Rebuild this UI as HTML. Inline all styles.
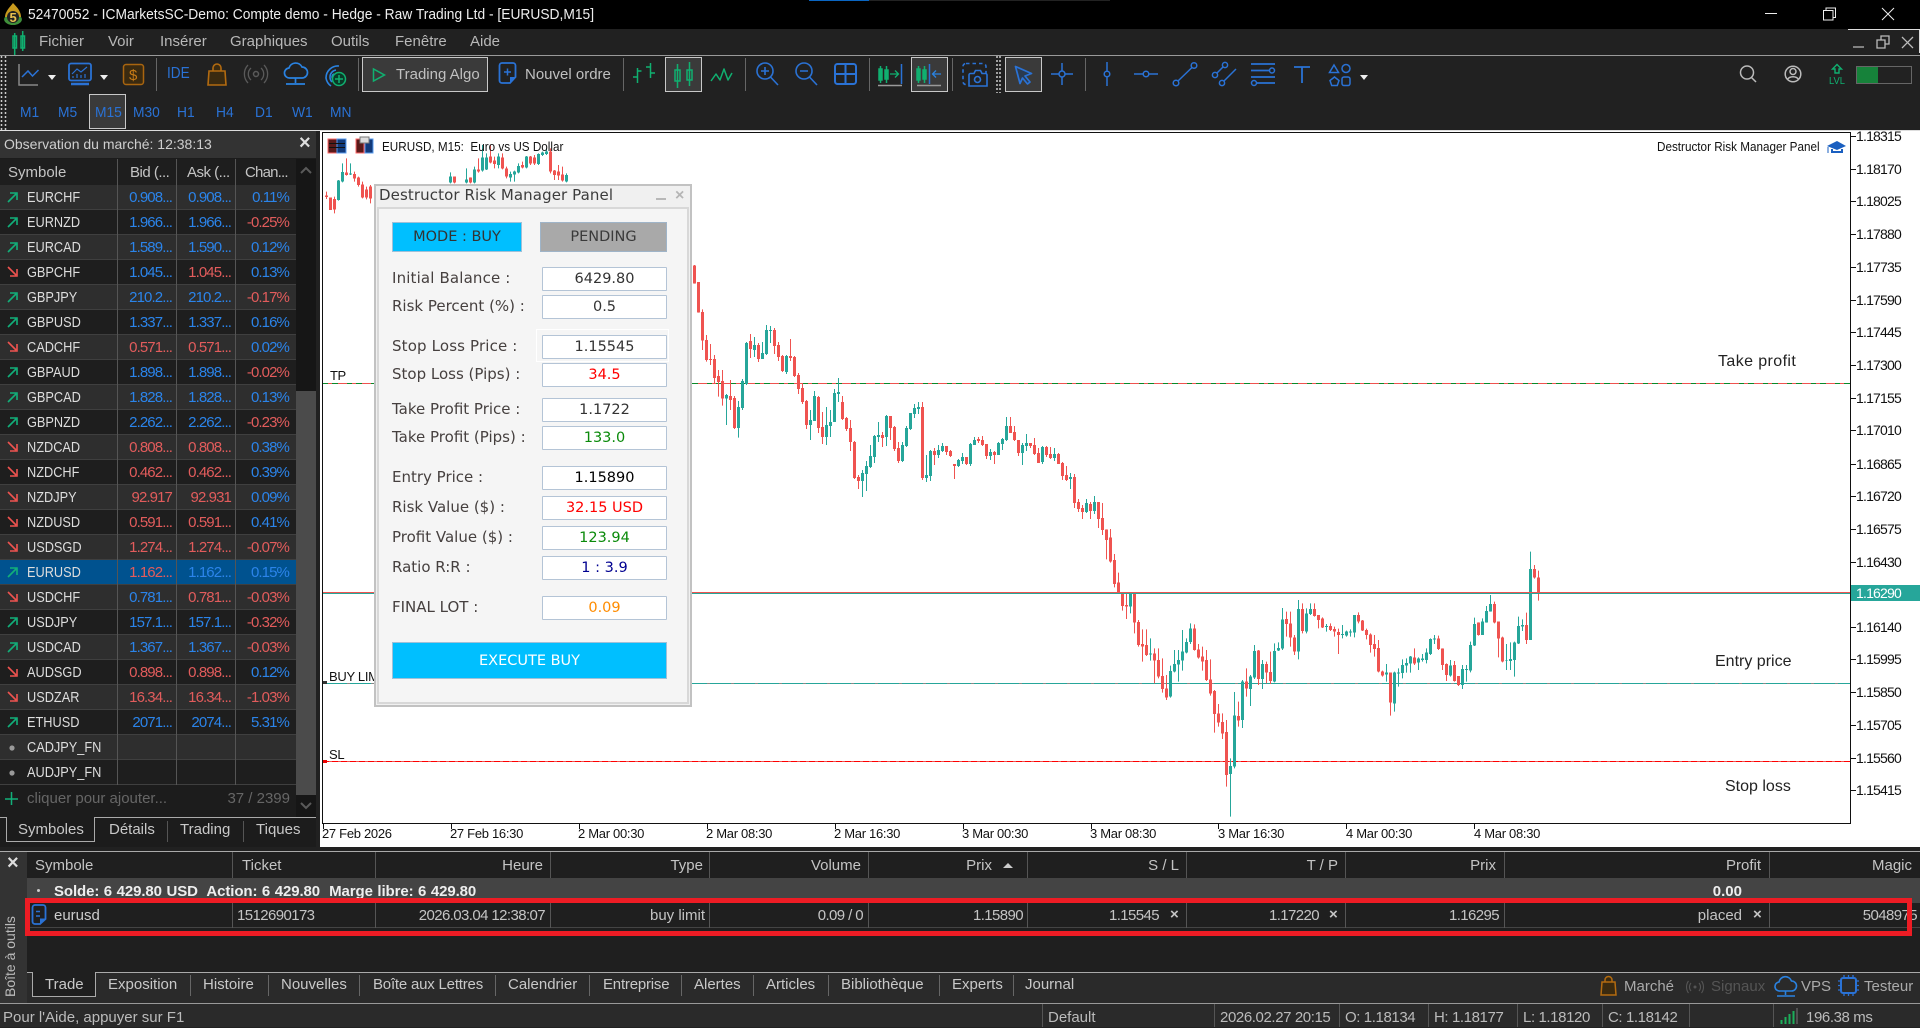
<!DOCTYPE html>
<html><head><meta charset="utf-8"><title>MT5</title>
<style>
html,body{margin:0;padding:0;width:1920px;height:1027px;overflow:hidden;background:#212121;font-family:"Liberation Sans",sans-serif;font-size:15px;color:#ccc}
.a,.t{position:absolute;white-space:nowrap}
.t{line-height:20px;height:20px}
.bx{position:absolute;box-sizing:border-box}
.r{height:25px;width:296px;position:relative;box-sizing:border-box;border-bottom:1px solid #3f3f3f;background:#1e1e1e}
.r.l{background:#2e2e2e}
.r.s{background:#00528f}
.r svg{position:absolute;left:6px;top:4px}
.r b{position:absolute;left:27px;top:3px;font-weight:normal;color:#ddd;line-height:20px;transform:scaleX(.85);transform-origin:0 50%;white-space:nowrap}
.r i{position:absolute;top:3px;font-style:normal;line-height:20px;letter-spacing:-.9px;white-space:nowrap}
.c2{right:124px}.c3{right:65px}.c4{right:7px}
.B{color:#2b84ea}.R{color:#e25c5c}
.n{letter-spacing:-.6px;color:#bdbdbd}
.hd{color:#c4c4c4}
.sp{position:absolute;width:1px;background:#555}
.tab{color:#c8c8c8}
.p{font-family:"DejaVu Sans","Liberation Sans",sans-serif;color:#3f3a3a}
.pl{position:absolute;left:392px;font-family:"DejaVu Sans",sans-serif;color:#46403f;font-size:15px;line-height:20px;white-space:nowrap}
.pi{position:absolute;left:542px;width:125px;height:24px;box-sizing:border-box;border:1px solid #b4c4d6;background:#fff;border-radius:1px;text-align:center;font-family:"DejaVu Sans",sans-serif;font-size:14.5px;line-height:23px;color:#333}
.px{font-size:14px;letter-spacing:-.8px;color:#111;left:1856px}
.tl{font-size:13px;letter-spacing:-.3px;color:#111;top:824px}
.m{color:#b8b8b8;top:32px}
.tf{color:#2a72d5;top:103px;transform:scaleX(.92);transform-origin:0 50%}
.pr{position:absolute;white-space:nowrap;line-height:20px;top:906px;letter-spacing:-.6px;color:#c4c4c4}
</style></head>
<body>
<!-- title bar -->
<div class="bx" style="left:0;top:0;width:1920px;height:29px;background:#000"></div>
<div class="bx" style="left:809px;top:0;width:301px;height:1px;background:#222"></div>
<div class="bx" style="left:809px;top:0;width:60px;height:1px;background:#0a66c2"></div>
<div class="t" style="left:28px;top:5px;color:#eee;transform:scaleX(.92);transform-origin:0 50%">52470052 - ICMarketsSC-Demo: Compte demo - Hedge - Raw Trading Ltd - [EURUSD,M15]</div>
<!-- bars -->
<div class="bx" style="left:0;top:55px;width:1920px;height:1px;background:#9a9a9a"></div>
<div class="bx" style="left:1848px;top:29px;width:72px;height:1px;background:#ddd"></div>
<div class="bx" style="left:1919px;top:29px;width:1px;height:24px;background:#ddd"></div>
<div class="bx" style="left:0;top:130px;width:1920px;height:1px;background:#ddd"></div>
<!-- menu -->
<div class="t m" style="left:39px">Fichier</div><div class="t m" style="left:108px">Voir</div><div class="t m" style="left:160px">Insérer</div><div class="t m" style="left:230px">Graphiques</div><div class="t m" style="left:331px">Outils</div><div class="t m" style="left:395px">Fenêtre</div><div class="t m" style="left:470px">Aide</div>
<!-- toolbar buttons -->
<div class="bx" style="left:362px;top:57px;width:126px;height:35px;background:#3a3a3a;border:1px solid #c8c8c8"></div>
<div class="bx" style="left:665px;top:57px;width:37px;height:35px;background:#3a3a3a;border:1px solid #c8c8c8"></div>
<div class="bx" style="left:911px;top:57px;width:37px;height:35px;background:#3a3a3a;border:1px solid #c8c8c8"></div>
<div class="bx" style="left:1005px;top:57px;width:37px;height:35px;background:#3a3a3a;border:1px solid #c8c8c8"></div>
<div class="bx" style="left:89px;top:94px;width:37px;height:35px;background:#3a3a3a;border:1px solid #c8c8c8"></div>
<div class="t" style="left:396px;top:65px;color:#c0c0c0">Trading Algo</div>
<div class="t" style="left:525px;top:65px;color:#c0c0c0">Nouvel ordre</div>
<div class="t" style="left:167px;top:64px;color:#2a72d5;font-size:16px;transform:scaleX(.85);transform-origin:0 50%">IDE</div>
<div class="t tf" style="left:20px">M1</div><div class="t tf" style="left:58px">M5</div><div class="t tf" style="left:95px">M15</div><div class="t tf" style="left:133px">M30</div><div class="t tf" style="left:177px">H1</div><div class="t tf" style="left:216px">H4</div><div class="t tf" style="left:255px">D1</div><div class="t tf" style="left:292px">W1</div><div class="t tf" style="left:330px">MN</div>

<!-- chart background -->
<div class="bx" style="left:320px;top:131px;width:1600px;height:716px;background:#fff"></div>
<div class="t" style="left:382px;top:137px;font-size:13px;color:#111;z-index:3;transform:scaleX(.9);transform-origin:0 50%">EURUSD, M15:&nbsp; Euro vs US Dollar</div>
<div class="t" style="left:1657px;top:137px;font-size:13px;color:#111;transform:scaleX(.9);transform-origin:0 50%">Destructor Risk Manager Panel</div>

<!-- chart svg -->
<svg class="a" style="left:0;top:0;z-index:1" width="1920" height="1027" viewBox="0 0 1920 1027" fill="none">
<g shape-rendering="crispEdges">
<path d="M322 132.5H1850.5V823.5H322.5V132" stroke="#111"/>
<path d="M1851 136.5h5M1851 169.5h5M1851 201.5h5M1851 234.5h5M1851 267.5h5M1851 300.5h5M1851 332.5h5M1851 365.5h5M1851 398.5h5M1851 430.5h5M1851 464.5h5M1851 496.5h5M1851 529.5h5M1851 562.5h5M1851 627.5h5M1851 659.5h5M1851 692.5h5M1851 725.5h5M1851 758.5h5M1851 790.5h5M323.5 824v5M451.5 824v5M579.5 824v5M707.5 824v5M835.5 824v5M963.5 824v5M1091.5 824v5M1218.5 824v5M1346.5 824v5M1474.5 824v5" stroke="#111"/>
<!-- lines -->
<path d="M323 383.5H1850" stroke="#ef5350"/>
<path d="M323 383.5H1850" stroke="#0a8a2a" stroke-dasharray="5 4 6 9"/>
<path d="M323 683.5H1850" stroke="#26a69a"/>
<path d="M323 683.5H1850" stroke="#888" stroke-dasharray="3 21"/>
<path d="M323 761.5H1850" stroke="#ef5350"/>
<path d="M323 761.5H1850" stroke="#f00" stroke-dasharray="6 3"/>
<!-- group A -->
<g transform="translate(0,260) scale(1,.33333)">
<g stroke="#ef5350">
<path stroke-width="1" d="M694.5 15V71M698.5 66V158M702.5 148V270M706.5 225V305M710.5 252V315M714.5 285V370M718.5 330V410M722.5 330V437M730.5 360V450M734.5 408V507M750.5 222V294M758.5 249V306M774.5 204V282M778.5 246V303M782.5 285V336M790.5 237V303M794.5 288V351M798.5 339V402M802.5 372V432M806.5 420V507M818.5 408V519M822.5 456V552M842.5 408V480M846.5 471V513M850.5 480V573M854.5 543V657M858.5 645V687M882.5 516V561M890.5 468V540M894.5 498V573M898.5 546V609M922.5 426V660M934.5 564V615M946.5 558V585M950.5 570V591M954.5 612V657M966.5 591V615M978.5 531V549M982.5 528V558M986.5 552V597M994.5 573V612M1010.5 471V519M1014.5 498V543M1018.5 540V588M1030.5 549V564M1034.5 534V585M1038.5 564V609M1046.5 558V591M1050.5 561V597M1058.5 579V612M1062.5 606V660M1066.5 618V663M1074.5 642V744M1078.5 717V756M1082.5 735V777M1090.5 726V777M1098.5 726V804M1102.5 729V825"/>
<path stroke-width="3" d="M694.5 17V71M698.5 66V158M702.5 156V242M706.5 240V300M710.5 297V300M714.5 297V354M718.5 348V366M722.5 363V416M730.5 408V420M734.5 414V504M750.5 243V267M758.5 255V297M774.5 210V258M778.5 255V291M782.5 288V333M790.5 288V294M794.5 291V348M798.5 345V387M802.5 384V426M806.5 423V495M818.5 411V504M822.5 501V531M842.5 426V477M846.5 474V507M850.5 504V546M854.5 546V654M858.5 651V663M882.5 525V534M890.5 468V504M894.5 501V567M898.5 564V603M922.5 441V654M934.5 573V585M946.5 558V576M950.5 573V588M954.5 612V618M966.5 591V612M978.5 537V543M982.5 540V555M986.5 552V588M994.5 576V585M1010.5 498V519M1014.5 516V540M1018.5 540V579M1030.5 549V558M1034.5 555V582M1038.5 579V609M1046.5 561V585M1050.5 582V594M1058.5 582V612M1062.5 609V648M1066.5 645V660M1074.5 651V729M1078.5 726V747M1082.5 744V756M1090.5 732V753M1098.5 726V777M1102.5 774V810"/>
</g>
<g stroke="#26a69a">
<path stroke-width="1" d="M726.5 402V495M738.5 423V533M742.5 357V450M746.5 246V375M754.5 231V291M762.5 246V297M766.5 195V285M770.5 198V249M786.5 285V342M810.5 450V540M814.5 393V483M826.5 441V555M830.5 450V531M834.5 387V486M838.5 354V426M862.5 630V711M866.5 603V693M870.5 555V624M874.5 525V609M878.5 486V546M886.5 465V558M902.5 546V606M906.5 498V561M910.5 459V510M914.5 432V474M918.5 426V462M926.5 585V666M930.5 570V663M938.5 555V594M942.5 549V576M958.5 597V621M962.5 579V612M970.5 549V618M974.5 531V555M990.5 567V600M998.5 546V585M1002.5 534V570M1006.5 471V543M1022.5 549V615M1026.5 522V573M1042.5 558V612M1054.5 564V603M1070.5 639V687M1086.5 717V759M1094.5 708V762"/>
<path stroke-width="3" d="M726.5 405V416M738.5 441V504M742.5 363V444M746.5 249V372M754.5 255V270M762.5 279V297M766.5 210V282M770.5 210V213M786.5 288V336M810.5 480V495M814.5 408V483M826.5 495V531M830.5 486V498M834.5 399V486M838.5 396V402M862.5 639V663M866.5 618V642M870.5 588V621M874.5 528V591M878.5 525V531M886.5 468V531M902.5 555V603M906.5 504V558M910.5 459V507M914.5 444V462M918.5 441V447M926.5 645V654M930.5 573V648M938.5 570V585M942.5 558V573M958.5 600V618M962.5 591V603M970.5 552V612M974.5 540V555M990.5 576V588M998.5 549V585M1002.5 537V552M1006.5 498V540M1022.5 555V579M1026.5 549V558M1042.5 561V606M1054.5 582V594M1070.5 651V657M1086.5 729V756M1094.5 726V753"/>
</g>
</g>
<!-- group B -->
<g transform="translate(0,500) scale(1,.33333)">
<g stroke="#ef5350">
<path stroke-width="1" d="M1106.5 88V178M1110.5 87V188M1114.5 162V262M1118.5 218V280M1122.5 280V332M1126.5 280V357M1134.5 280V400M1138.5 360V440M1142.5 388V485M1146.5 388V468M1154.5 445V550M1158.5 445V535M1162.5 475V578M1166.5 525V600M1194.5 373V452M1198.5 432V476M1202.5 440V512M1206.5 450V543M1210.5 478V587M1214.5 570V698M1218.5 612V680M1222.5 640V717M1226.5 660V860M1238.5 605V680M1246.5 505V590M1258.5 450V555M1266.5 485V550M1270.5 455V552M1286.5 335V410M1290.5 335V440M1294.5 405V465M1302.5 310V400M1314.5 310V350M1318.5 345V385M1322.5 352V384M1330.5 370V393M1334.5 380V410M1338.5 386V462M1358.5 337V370M1362.5 360V393M1366.5 386V418M1370.5 400V458M1374.5 405V470M1378.5 420V517M1382.5 512V530M1390.5 518V647M1414.5 445V495M1438.5 407V450M1442.5 445V510M1446.5 490V543M1454.5 483V545M1458.5 528V558M1478.5 367V407M1494.5 305V370M1498.5 365V472M1502.5 410V487M1526.5 338V432M1534.5 195V236M1538.5 212V302"/>
<path stroke-width="3" d="M1106.5 88V120M1110.5 113V185M1114.5 180V252M1118.5 248V278M1122.5 280V318M1126.5 315V320M1134.5 280V368M1138.5 366V435M1142.5 432V440M1146.5 435V465M1154.5 460V482M1158.5 480V530M1162.5 528V567M1166.5 565V592M1194.5 386V450M1198.5 448V472M1202.5 470V484M1206.5 480V540M1210.5 538V580M1214.5 573V642M1218.5 640V668M1222.5 666V700M1226.5 696V825M1238.5 648V662M1246.5 545V566M1258.5 452V537M1266.5 492V517M1270.5 516V543M1286.5 357V372M1290.5 370V413M1294.5 412V455M1302.5 327V393M1314.5 327V348M1318.5 345V360M1322.5 355V382M1330.5 378V390M1334.5 387V395M1338.5 396V405M1358.5 345V365M1362.5 362V392M1366.5 390V405M1370.5 403V435M1374.5 432V447M1378.5 444V515M1382.5 514V527M1390.5 518V608M1414.5 472V490M1438.5 415V447M1442.5 445V495M1446.5 492V525M1454.5 495V543M1458.5 528V555M1478.5 367V405M1494.5 312V368M1498.5 365V415M1502.5 413V485M1526.5 375V420M1534.5 207V233M1538.5 232V280"/>
</g>
<g stroke="#26a69a">
<path stroke-width="1" d="M1130.5 280V340M1150.5 415V482M1170.5 497V593M1174.5 450V517M1178.5 450V545M1182.5 390V512M1186.5 415V460M1190.5 370V432M1230.5 775V950M1234.5 576V805M1242.5 540V684M1250.5 525V618M1254.5 435V537M1262.5 480V567M1274.5 430V547M1278.5 427V453M1282.5 324V450M1298.5 300V478M1306.5 325V400M1310.5 310V345M1326.5 372V395M1342.5 375V415M1346.5 392V410M1350.5 388V410M1354.5 345V412M1386.5 492V545M1394.5 515V635M1398.5 505V560M1402.5 478V535M1406.5 475V518M1410.5 468V518M1418.5 472V510M1422.5 462V485M1426.5 445V490M1430.5 415V465M1434.5 405V432M1450.5 480V530M1462.5 495V567M1466.5 495V545M1470.5 425V517M1474.5 353V438M1482.5 355V405M1486.5 318V368M1490.5 285V335M1506.5 432V510M1510.5 427V510M1514.5 425V530M1518.5 350V432M1522.5 358V393M1530.5 155V420"/>
<path stroke-width="3" d="M1130.5 280V320M1150.5 460V464M1170.5 513V590M1174.5 492V515M1178.5 480V494M1182.5 455V482M1186.5 426V457M1190.5 386V426M1230.5 798V822M1234.5 646V800M1242.5 545V660M1250.5 530V567M1254.5 453V533M1262.5 492V537M1274.5 453V545M1278.5 444V452M1282.5 358V446M1298.5 327V455M1306.5 340V395M1310.5 327V342M1326.5 378V381M1342.5 402V405M1346.5 395V407M1350.5 395V398M1354.5 345V398M1386.5 518V524M1394.5 517V611M1398.5 517V520M1402.5 495V519M1406.5 489V497M1410.5 470V491M1418.5 476V487M1422.5 476V480M1426.5 458V480M1430.5 417V462M1434.5 415V418M1450.5 497V527M1462.5 507V555M1466.5 507V510M1470.5 435V512M1474.5 372V437M1482.5 365V405M1486.5 333V367M1490.5 312V334M1506.5 480V482M1510.5 477V483M1514.5 427V480M1518.5 378V430M1522.5 375V380M1530.5 207V420"/>
</g>
</g>
<!-- group C -->
<g transform="translate(0,130) scale(1,.33333)">
<g stroke="#ef5350">
<path stroke-width="1" d="M326.5 185V207M330.5 203V240M334.5 200V250M346.5 85V137M354.5 125V155M358.5 140V170M362.5 155V205M366.5 170V208M370.5 165V220M454.5 140V160M470.5 142V160M478.5 85V128M490.5 45V100M494.5 80V115M502.5 70V118M506.5 110V145M522.5 95V115M530.5 78V105M534.5 75V105M550.5 55V130M554.5 120V150M558.5 105V150M562.5 110V155"/>
<path stroke-width="3" d="M326.5 197V201M330.5 203V240M334.5 207V239M346.5 127V135M354.5 132V145M358.5 143V165M362.5 163V203M366.5 178V203M370.5 170V205M454.5 140V158M470.5 142V158M478.5 118V125M490.5 80V97M494.5 92V102M502.5 82V115M506.5 115V140M522.5 105V112M530.5 80V100M534.5 82V100M550.5 65V125M554.5 122V135M558.5 125V137M562.5 133V152"/>
</g>
<g stroke="#26a69a">
<path stroke-width="1" d="M338.5 150V212M342.5 100V157M350.5 100V135M450.5 127V160M466.5 115V160M474.5 110V160M482.5 45V125M486.5 70V120M498.5 70V115M510.5 125V155M514.5 122V155M518.5 100V130M526.5 78V115M538.5 70V105M542.5 65V78M546.5 55V75M566.5 130V157"/>
<path stroke-width="3" d="M338.5 152V210M342.5 126V155M350.5 130V133M450.5 140V158M466.5 148V158M474.5 118V158M482.5 82V122M486.5 82V118M498.5 80V105M510.5 132V142M514.5 125V133M518.5 108V127M526.5 80V113M538.5 72V102M542.5 68V75M546.5 65V72M566.5 135V155"/>
</g>
</g>
<!-- price lines on top of candles -->
<path d="M323 592.5H1850" stroke="#ef5350"/>
<path d="M323 593.5H1850" stroke="#26a69a"/>
<path d="M323 684v-3h4v3z" fill="#333"/>
<path d="M323 763v-3h4v3z" fill="#e00"/>
<rect x="1851" y="585" width="69" height="16" fill="#26a69a"/>
</g>
<!-- chart corner icons -->
<rect x="328" y="139" width="9" height="14" fill="#5a1a1a" stroke="#ff6a6a"/>
<rect x="337" y="139" width="9" height="14" fill="#123a7a" stroke="#5a9cf0"/>
<path d="M329 143.5h16M329 147.5h16" stroke="#111"/>
<rect x="356" y="139" width="8" height="14" fill="#5a1a1a" stroke="#ff6a6a"/>
<rect x="365" y="139" width="8" height="14" fill="#123a7a" stroke="#5a9cf0"/>
<rect x="360" y="137" width="9" height="6" fill="#ddd" stroke="#777"/>
<path d="M1827 146l10-5 9 5-9 4z" fill="#1a5fc0"/><path d="M1832 149v3h10v-3" stroke="#1a5fc0" stroke-width="2"/><path d="M1828 147v6" stroke="#1a5fc0"/>
</svg>

<!-- chart labels -->
<div class="t" style="left:330px;top:366px;font-size:13px;color:#111;letter-spacing:-.5px;z-index:1">TP</div>
<div class="t" style="left:329px;top:667px;font-size:13px;color:#111;letter-spacing:-.3px;z-index:1">BUY LIMIT</div>
<div class="t" style="left:329px;top:745px;font-size:13px;color:#111;letter-spacing:-.3px;z-index:1">SL</div>
<div class="t" style="left:1718px;top:352px;font-size:16px;color:#222;z-index:1;letter-spacing:.4px">Take profit</div>
<div class="t" style="left:1715px;top:652px;font-size:16px;color:#222;z-index:1">Entry price</div>
<div class="t" style="left:1725px;top:777px;font-size:16px;color:#222;z-index:1">Stop loss</div>
<div class="t px" style="top:126px">1.18315</div><div class="t px" style="top:159px">1.18170</div><div class="t px" style="top:191px">1.18025</div><div class="t px" style="top:224px">1.17880</div><div class="t px" style="top:257px">1.17735</div><div class="t px" style="top:290px">1.17590</div><div class="t px" style="top:322px">1.17445</div><div class="t px" style="top:355px">1.17300</div><div class="t px" style="top:388px">1.17155</div><div class="t px" style="top:420px">1.17010</div><div class="t px" style="top:454px">1.16865</div><div class="t px" style="top:486px">1.16720</div><div class="t px" style="top:519px">1.16575</div><div class="t px" style="top:552px">1.16430</div><div class="t px" style="top:583px;color:#fff;z-index:2">1.16290</div><div class="t px" style="top:617px">1.16140</div><div class="t px" style="top:649px">1.15995</div><div class="t px" style="top:682px">1.15850</div><div class="t px" style="top:715px">1.15705</div><div class="t px" style="top:748px">1.15560</div><div class="t px" style="top:780px">1.15415</div>
<div class="t tl" style="left:322px">27 Feb 2026</div><div class="t tl" style="left:450px">27 Feb 16:30</div><div class="t tl" style="left:578px">2 Mar 00:30</div><div class="t tl" style="left:706px">2 Mar 08:30</div><div class="t tl" style="left:834px">2 Mar 16:30</div><div class="t tl" style="left:962px">3 Mar 00:30</div><div class="t tl" style="left:1090px">3 Mar 08:30</div><div class="t tl" style="left:1218px">3 Mar 16:30</div><div class="t tl" style="left:1346px">4 Mar 00:30</div><div class="t tl" style="left:1474px">4 Mar 08:30</div>

<!-- panel -->
<div style="position:absolute;left:0;top:0;z-index:5">
<div class="bx" style="left:374px;top:184px;width:318px;height:523px;background:#f0f0f0;border:2px solid #c2c2c2"></div>
<div class="bx" style="left:377px;top:207px;width:312px;height:497px;background:#f5f5f5;border:2px solid #d8d8d8"></div>
<div class="t p" style="left:379px;top:185px;font-size:15px;color:#3c3c3c;letter-spacing:.1px">Destructor Risk Manager Panel</div>
<div class="bx" style="left:656px;top:198px;width:10px;height:2px;background:#b8b8b8"></div>
<div class="t" style="left:675px;top:186px;font-weight:bold;font-size:16px;color:#b5b5b5">×</div>
<div class="bx" style="left:392px;top:222px;width:130px;height:30px;background:#00bfff;border:1px solid #9fc0d8;text-align:center;font-family:'DejaVu Sans',sans-serif;font-size:14.5px;line-height:29px;color:#333">MODE : BUY</div>
<div class="bx" style="left:540px;top:222px;width:127px;height:30px;background:#a9a9a9;border:1px solid #9fb4c8;text-align:center;font-family:'DejaVu Sans',sans-serif;font-size:14.5px;line-height:29px;color:#3a3a3a">PENDING</div>
<div class="pl" style="top:268px;letter-spacing:.15px">Initial Balance :</div><div class="pi" style="top:267px">6429.80</div>
<div class="pl" style="top:296px">Risk Percent (%) :</div><div class="pi" style="top:295px">0.5</div>
<div class="bx" style="left:536px;top:329px;width:133px;height:33px;border:1px solid #fff"></div>
<div class="pl" style="top:336px;letter-spacing:.15px">Stop Loss Price :</div><div class="pi" style="top:335px">1.15545</div>
<div class="pl" style="top:364px">Stop Loss (Pips) :</div><div class="pi" style="top:363px;color:#f00">34.5</div>
<div class="pl" style="top:399px">Take Profit Price :</div><div class="pi" style="top:398px">1.1722</div>
<div class="pl" style="top:427px">Take Profit (Pips) :</div><div class="pi" style="top:426px;color:#0a8a0a">133.0</div>
<div class="pl" style="top:467px">Entry Price :</div><div class="pi" style="top:466px;color:#000">1.15890</div>
<div class="pl" style="top:497px">Risk Value ($) :</div><div class="pi" style="top:496px;color:#f00">32.15 USD</div>
<div class="pl" style="top:527px">Profit Value ($) :</div><div class="pi" style="top:526px;color:#0a8a0a">123.94</div>
<div class="pl" style="top:557px">Ratio R:R :</div><div class="pi" style="top:556px;color:#000090">1 : 3.9</div>
<div class="pl" style="top:597px">FINAL LOT :</div><div class="pi" style="top:596px;color:#ff8c00">0.09</div>
<div class="bx" style="left:392px;top:642px;width:275px;height:37px;background:#00bfff;border:1px solid #9fc0d8;text-align:center;font-family:'DejaVu Sans',sans-serif;font-size:14.5px;line-height:36px;color:#fff">EXECUTE BUY</div>
</div>

<!-- market watch -->
<div class="bx" style="left:0;top:131px;width:316px;height:720px;background:#1c1c1c"></div>
<div class="bx" style="left:0;top:131px;width:316px;height:27px;background:#333"></div>
<div class="t" style="left:4px;top:134px;color:#cfcfcf;font-size:14px">Observation du marché: 12:38:13</div>
<div class="t" style="left:299px;top:133px;color:#ddd;font-size:20px;font-weight:bold">×</div>
<div class="bx" style="left:0;top:159px;width:296px;height:26px;background:#1e1e1e"></div>
<div class="t hd" style="left:8px;top:163px">Symbole</div>
<div class="t hd" style="left:130px;top:163px;letter-spacing:-.5px">Bid (...</div>
<div class="t hd" style="left:187px;top:163px;letter-spacing:-.5px">Ask (...</div>
<div class="t hd" style="left:245px;top:163px;letter-spacing:-.8px">Chan...</div>
<div class="bx" style="left:296px;top:159px;width:20px;height:658px;background:#161616"></div>
<div class="bx" style="left:296px;top:391px;width:20px;height:404px;background:#4b4b4b"></div>
<svg class="a" style="left:298px;top:164px" width="16" height="12" fill="none" stroke="#5a5a5a" stroke-width="2"><path d="M3 9l5-5 5 5"/></svg>
<svg class="a" style="left:298px;top:800px" width="16" height="12" fill="none" stroke="#5a5a5a" stroke-width="2"><path d="M3 3l5 5 5-5"/></svg>
<svg width="0" height="0" style="position:absolute"><defs>
<g id="u" fill="none" stroke="#12b07a" stroke-width="1.6"><path d="M2 13L10 5M4 4h7v7"/></g>
<g id="d" fill="none" stroke="#ef5350" stroke-width="1.6"><path d="M2 3l8 8M4 12h7V5"/></g>
</defs></svg>
<div class="a" style="left:0;top:185px;width:296px">
<div class="r l"><svg width="14" height="16"><use href="#u"/></svg><b>EURCHF</b><i class="c2 B">0.908...</i><i class="c3 B">0.908...</i><i class="c4 B">0.11%</i></div>
<div class="r"><svg width="14" height="16"><use href="#u"/></svg><b>EURNZD</b><i class="c2 B">1.966...</i><i class="c3 B">1.966...</i><i class="c4 R">-0.25%</i></div>
<div class="r l"><svg width="14" height="16"><use href="#u"/></svg><b>EURCAD</b><i class="c2 B">1.589...</i><i class="c3 B">1.590...</i><i class="c4 B">0.12%</i></div>
<div class="r"><svg width="14" height="16"><use href="#d"/></svg><b>GBPCHF</b><i class="c2 B">1.045...</i><i class="c3 R">1.045...</i><i class="c4 B">0.13%</i></div>
<div class="r l"><svg width="14" height="16"><use href="#u"/></svg><b>GBPJPY</b><i class="c2 B">210.2...</i><i class="c3 B">210.2...</i><i class="c4 R">-0.17%</i></div>
<div class="r"><svg width="14" height="16"><use href="#u"/></svg><b>GBPUSD</b><i class="c2 B">1.337...</i><i class="c3 B">1.337...</i><i class="c4 B">0.16%</i></div>
<div class="r l"><svg width="14" height="16"><use href="#d"/></svg><b>CADCHF</b><i class="c2 R">0.571...</i><i class="c3 R">0.571...</i><i class="c4 B">0.02%</i></div>
<div class="r"><svg width="14" height="16"><use href="#u"/></svg><b>GBPAUD</b><i class="c2 B">1.898...</i><i class="c3 B">1.898...</i><i class="c4 R">-0.02%</i></div>
<div class="r l"><svg width="14" height="16"><use href="#u"/></svg><b>GBPCAD</b><i class="c2 B">1.828...</i><i class="c3 B">1.828...</i><i class="c4 B">0.13%</i></div>
<div class="r"><svg width="14" height="16"><use href="#u"/></svg><b>GBPNZD</b><i class="c2 B">2.262...</i><i class="c3 B">2.262...</i><i class="c4 R">-0.23%</i></div>
<div class="r l"><svg width="14" height="16"><use href="#d"/></svg><b>NZDCAD</b><i class="c2 R">0.808...</i><i class="c3 R">0.808...</i><i class="c4 B">0.38%</i></div>
<div class="r"><svg width="14" height="16"><use href="#d"/></svg><b>NZDCHF</b><i class="c2 R">0.462...</i><i class="c3 R">0.462...</i><i class="c4 B">0.39%</i></div>
<div class="r l"><svg width="14" height="16"><use href="#d"/></svg><b>NZDJPY</b><i class="c2 R">92.917</i><i class="c3 R">92.931</i><i class="c4 B">0.09%</i></div>
<div class="r"><svg width="14" height="16"><use href="#d"/></svg><b>NZDUSD</b><i class="c2 R">0.591...</i><i class="c3 R">0.591...</i><i class="c4 B">0.41%</i></div>
<div class="r l"><svg width="14" height="16"><use href="#d"/></svg><b>USDSGD</b><i class="c2 R">1.274...</i><i class="c3 R">1.274...</i><i class="c4 R">-0.07%</i></div>
<div class="r s"><svg width="14" height="16"><use href="#u"/></svg><b>EURUSD</b><i class="c2 R">1.162...</i><i class="c3 B">1.162...</i><i class="c4 B">0.15%</i></div>
<div class="r l"><svg width="14" height="16"><use href="#d"/></svg><b>USDCHF</b><i class="c2 B">0.781...</i><i class="c3 R">0.781...</i><i class="c4 R">-0.03%</i></div>
<div class="r"><svg width="14" height="16"><use href="#u"/></svg><b>USDJPY</b><i class="c2 B">157.1...</i><i class="c3 B">157.1...</i><i class="c4 R">-0.32%</i></div>
<div class="r l"><svg width="14" height="16"><use href="#u"/></svg><b>USDCAD</b><i class="c2 B">1.367...</i><i class="c3 B">1.367...</i><i class="c4 R">-0.03%</i></div>
<div class="r"><svg width="14" height="16"><use href="#d"/></svg><b>AUDSGD</b><i class="c2 R">0.898...</i><i class="c3 R">0.898...</i><i class="c4 B">0.12%</i></div>
<div class="r l"><svg width="14" height="16"><use href="#d"/></svg><b>USDZAR</b><i class="c2 R">16.34...</i><i class="c3 R">16.34...</i><i class="c4 R">-1.03%</i></div>
<div class="r"><svg width="14" height="16"><use href="#u"/></svg><b>ETHUSD</b><i class="c2 B">2071...</i><i class="c3 B">2074...</i><i class="c4 B">5.31%</i></div>
<div class="r l"><svg width="14" height="16"><circle cx="6" cy="9" r="2.6" fill="#999"/></svg><b>CADJPY_FN</b></div>
<div class="r"><svg width="14" height="16"><circle cx="6" cy="9" r="2.6" fill="#999"/></svg><b>AUDJPY_FN</b></div>
</div>
<div class="sp" style="left:117px;top:159px;height:626px"></div><div class="sp" style="left:176px;top:159px;height:626px"></div><div class="sp" style="left:235px;top:159px;height:626px"></div>
<svg class="a" style="left:4px;top:791px" width="16" height="16" fill="none" stroke="#12b07a" stroke-width="1.5"><path d="M1 8h13M7.5 1v13"/></svg>
<div class="t" style="left:27px;top:789px;color:#666">cliquer pour ajouter...</div>
<div class="t" style="right:1630px;top:789px;color:#666">37 / 2399</div>
<div class="bx" style="left:0;top:817px;width:6px;height:1px;background:#aaa"></div>
<div class="bx" style="left:95px;top:817px;width:221px;height:1px;background:#aaa"></div>
<div class="bx" style="left:6px;top:817px;width:89px;height:25px;border:solid #aaa;border-width:0 1px 1px 1px"></div>
<div class="t tab" style="left:18px;top:820px">Symboles</div><div class="t tab" style="left:109px;top:820px">Détails</div><div class="t tab" style="left:180px;top:820px">Trading</div><div class="t tab" style="left:256px;top:820px">Tiques</div>
<div class="sp" style="left:167px;top:821px;height:21px"></div><div class="sp" style="left:243px;top:821px;height:21px"></div>

<!-- toolbox -->
<div class="bx" style="left:0;top:847px;width:1920px;height:180px;background:#212121"></div>
<div class="bx" style="left:0;top:851px;width:1920px;height:1px;background:#aaa"></div>
<div class="bx" style="left:0;top:852px;width:27px;height:151px;background:#333"></div>
<div class="bx" style="left:27px;top:852px;width:1893px;height:26px;background:#1f1f1f"></div>
<div class="bx" style="left:27px;top:878px;width:1893px;height:25px;background:#444"></div>
<div class="bx" style="left:27px;top:903px;width:1893px;height:25px;background:#1f1f1f;border-bottom:1px solid #444"></div>
<div class="bx" style="left:27px;top:928px;width:1893px;height:44px;background:#1f1f1f"></div>
<div class="sp" style="left:232px;top:852px;height:26px"></div><div class="sp" style="left:375px;top:852px;height:26px"></div><div class="sp" style="left:550px;top:852px;height:26px"></div><div class="sp" style="left:709px;top:852px;height:26px"></div><div class="sp" style="left:868px;top:852px;height:26px"></div><div class="sp" style="left:1027px;top:852px;height:26px"></div><div class="sp" style="left:1186px;top:852px;height:26px"></div><div class="sp" style="left:1345px;top:852px;height:26px"></div><div class="sp" style="left:1504px;top:852px;height:26px"></div><div class="sp" style="left:1769px;top:852px;height:26px"></div>
<div class="sp" style="left:232px;top:903px;height:25px"></div><div class="sp" style="left:375px;top:903px;height:25px"></div><div class="sp" style="left:550px;top:903px;height:25px"></div><div class="sp" style="left:709px;top:903px;height:25px"></div><div class="sp" style="left:868px;top:903px;height:25px"></div><div class="sp" style="left:1027px;top:903px;height:25px"></div><div class="sp" style="left:1186px;top:903px;height:25px"></div><div class="sp" style="left:1345px;top:903px;height:25px"></div><div class="sp" style="left:1504px;top:903px;height:25px"></div><div class="sp" style="left:1769px;top:903px;height:25px"></div>
<div class="t" style="left:7px;top:853px;color:#ddd;font-size:20px;font-weight:bold">×</div>
<div class="t" style="left:-29px;top:948px;width:78px;text-align:center;color:#bbb;font-size:14px;transform:rotate(-90deg)">Boîte à outils</div>
<div class="t hd" style="left:35px;top:856px">Symbole</div><div class="t hd" style="left:242px;top:856px">Ticket</div>
<div class="t hd" style="right:1377px;top:856px">Heure</div><div class="t hd" style="right:1217px;top:856px">Type</div><div class="t hd" style="right:1059px;top:856px">Volume</div><div class="t hd" style="right:928px;top:856px">Prix</div><div class="t hd" style="right:741px;top:856px">S / L</div><div class="t hd" style="right:582px;top:856px">T / P</div><div class="t hd" style="right:424px;top:856px">Prix</div><div class="t hd" style="right:159px;top:856px">Profit</div><div class="t hd" style="right:8px;top:856px">Magic</div>
<svg class="a" style="left:1003px;top:862px" width="11" height="7"><path d="M0 6L5 1l5 5z" fill="#ccc"/></svg>
<div class="bx" style="left:37px;top:889px;width:3px;height:3px;background:#ccc;border-radius:2px"></div>
<div class="t" style="left:54px;top:882px;color:#eee;font-weight:bold;letter-spacing:-.1px;word-spacing:.5px">Solde: 6 429.80 USD&nbsp; Action: 6 429.80&nbsp; Marge libre: 6 429.80</div>
<div class="t" style="right:178px;top:882px;color:#eee;font-weight:bold">0.00</div>
<div class="pr" style="left:54px;color:#ccc;letter-spacing:0">eurusd</div>
<div class="pr" style="left:237px">1512690173</div>
<div class="pr" style="right:1375px">2026.03.04 12:38:07</div>
<div class="pr" style="right:1215px;letter-spacing:0">buy limit</div>
<div class="pr" style="right:1057px">0.09 / 0</div>
<div class="pr" style="right:897px">1.15890</div>
<div class="pr" style="right:761px">1.15545</div>
<div class="pr" style="right:601px">1.17220</div>
<div class="pr" style="right:421px">1.16295</div>
<div class="pr" style="right:178px;letter-spacing:0">placed</div>
<div class="pr" style="right:3px">5048975</div>
<div class="pr" style="left:1170px;top:905px;font-weight:bold;letter-spacing:0">×</div>
<div class="pr" style="left:1329px;top:905px;font-weight:bold;letter-spacing:0">×</div>
<div class="pr" style="left:1753px;top:905px;font-weight:bold;letter-spacing:0">×</div>
<!-- red highlight -->
<div class="bx" style="left:25px;top:898px;width:1887px;height:38px;border:5px solid #ed1c24"></div>
<!-- tabs -->
<div class="bx" style="left:27px;top:972px;width:1893px;height:31px;background:#2a2a2a"></div>
<div class="bx" style="left:27px;top:972px;width:5px;height:1px;background:#aaa"></div>
<div class="bx" style="left:95px;top:972px;width:1825px;height:1px;background:#aaa"></div>
<div class="bx" style="left:32px;top:972px;width:64px;height:25px;background:#1f1f1f;border:solid #aaa;border-width:0 1px 1px 1px"></div>
<div class="t tab" style="left:45px;top:975px">Trade</div><div class="t tab" style="left:108px;top:975px">Exposition</div><div class="t tab" style="left:203px;top:975px">Histoire</div><div class="t tab" style="left:281px;top:975px">Nouvelles</div><div class="t tab" style="left:373px;top:975px;letter-spacing:-.2px">Boîte aux Lettres</div><div class="t tab" style="left:508px;top:975px">Calendrier</div><div class="t tab" style="left:603px;top:975px;letter-spacing:-.2px">Entreprise</div><div class="t tab" style="left:694px;top:975px">Alertes</div><div class="t tab" style="left:766px;top:975px">Articles</div><div class="t tab" style="left:841px;top:975px">Bibliothèque</div><div class="t tab" style="left:952px;top:975px">Experts</div><div class="t tab" style="left:1025px;top:975px">Journal</div>
<div class="sp" style="left:190px;top:975px;height:21px;background:#666"></div><div class="sp" style="left:268px;top:975px;height:21px;background:#666"></div><div class="sp" style="left:359px;top:975px;height:21px;background:#666"></div><div class="sp" style="left:495px;top:975px;height:21px;background:#666"></div><div class="sp" style="left:589px;top:975px;height:21px;background:#666"></div><div class="sp" style="left:681px;top:975px;height:21px;background:#666"></div><div class="sp" style="left:753px;top:975px;height:21px;background:#666"></div><div class="sp" style="left:828px;top:975px;height:21px;background:#666"></div><div class="sp" style="left:939px;top:975px;height:21px;background:#666"></div><div class="sp" style="left:1013px;top:975px;height:21px;background:#666"></div>
<div class="t" style="left:1624px;top:977px;color:#aaa">Marché</div><div class="t" style="left:1711px;top:977px;color:#555">Signaux</div><div class="t" style="left:1801px;top:977px;color:#aaa">VPS</div><div class="t" style="left:1864px;top:977px;color:#aaa">Testeur</div>
<!-- status -->
<div class="bx" style="left:0;top:1003px;width:1920px;height:1px;background:#999"></div>
<div class="bx" style="left:0;top:1004px;width:1920px;height:23px;background:#2a2a2a"></div>
<div class="t" style="left:3px;top:1008px;color:#bbb">Pour l'Aide, appuyer sur F1</div>
<div class="t" style="left:1048px;top:1008px;color:#bbb">Default</div>
<div class="t" style="left:1220px;top:1008px;color:#bbb;letter-spacing:-.4px">2026.02.27 20:15</div>
<div class="t" style="left:1345px;top:1008px;color:#bbb;letter-spacing:-.4px">O: 1.18134</div>
<div class="t" style="left:1434px;top:1008px;color:#bbb;letter-spacing:-.4px">H: 1.18177</div>
<div class="t" style="left:1523px;top:1008px;color:#bbb;letter-spacing:-.4px">L: 1.18120</div>
<div class="t" style="left:1608px;top:1008px;color:#bbb;letter-spacing:-.4px">C: 1.18142</div>
<div class="t" style="left:1806px;top:1008px;color:#bbb;letter-spacing:-.4px">196.38 ms</div>
<div class="sp" style="left:1042px;top:1004px;height:23px"></div><div class="sp" style="left:1214px;top:1004px;height:23px"></div><div class="sp" style="left:1339px;top:1004px;height:23px"></div><div class="sp" style="left:1428px;top:1004px;height:23px"></div><div class="sp" style="left:1517px;top:1004px;height:23px"></div><div class="sp" style="left:1602px;top:1004px;height:23px"></div><div class="sp" style="left:1689px;top:1004px;height:23px"></div><div class="sp" style="left:1773px;top:1004px;height:23px"></div>

<!-- all icons -->
<svg class="a" style="left:0;top:0;z-index:8" width="1920" height="1027" viewBox="0 0 1920 1027" fill="none">
<!-- logo -->
<path d="M13 3c5 5 8 9 8 14a8 8 0 0 1-16 0c0-5 4-9 8-14z" fill="#c89a1e"/><path d="M5 17c-3 4 2 8 8 8s11-4 8-8" fill="#3f8f3a"/><circle cx="13" cy="17" r="6" fill="#222"/>
<text x="9.5" y="22" font-family="Liberation Sans" font-size="13" font-weight="bold" fill="#e8c050">5</text>
<!-- window -->
<path d="M1765 13.5h12M1882 8l12 12M1894 8l-12 12M1823.5 10.5h9.5v9.5h-9.5zM1826 10V8h9.5v9.5h-2.5" stroke="#eee"/>
<path d="M1853 47h11M1902 37l11 11M1913 37l-11 11" stroke="#bbb" stroke-width="1.3"/>
<path d="M1877 40h8v8h-8zM1881 40v-4h8v8h-4" stroke="#bbb" stroke-width="1.3"/>
<!-- menu candle icon -->
<path d="M13 36h3.5v12H13zM21 36h3.5v12H21zM14.7 33v22M22.700 31v20" stroke="#10b070" stroke-width="1.5"/>
<!-- dotted handles -->
<path d="M1.5 56v74M5.5 56v74M997 56v37M1000 56v37" stroke="#ccc" stroke-width="1.5" stroke-dasharray="2 2"/>
<!-- line chart -->
<path d="M19 64v21h19" stroke="#888" stroke-width="1.5"/><path d="M22 77l6-6 4.5 5 6-6" stroke="#2a72d5" stroke-width="1.5"/>
<path d="M48 75h8l-4 5zM100 75h8l-4 5zM1360 75h8l-4 5z" fill="#eee"/>
<!-- monitor -->
<rect x="69" y="63.5" width="22" height="17" rx="2" stroke="#2a72d5" stroke-width="1.8"/><path d="M72 74l5-5 4 3 6-5M73 78v-2M77 78v-4M81 78v-3M85 78v-4" stroke="#2a72d5" stroke-width="1.2"/><path d="M71 84h18" stroke="#2a72d5" stroke-width="2.5"/>
<!-- dollar -->
<rect x="123.5" y="64.5" width="20" height="20" rx="2.5" fill="#3a2a10" stroke="#a9650f" stroke-width="1.5"/>
<text x="129" y="80" font-family="Liberation Sans" font-size="15" fill="#c67a16">$</text>
<path d="M156.5 58v33M358.5 58v33M623.5 58v33M745.5 58v33M869.5 58v33M952.5 58v33M1085.5 58v33" stroke="#666"/>
<!-- bag -->
<path d="M209 71h16l1 14h-18zM213 71v-3a4 4 0 0 1 8 0v3" stroke="#b36b10" stroke-width="1.6" fill="#3a2a10"/>
<!-- signal -->
<circle cx="256" cy="74" r="2.5" stroke="#5a5a5a" stroke-width="1.5"/><path d="M251 68a8 8 0 0 0 0 12M261 68a8 8 0 0 1 0 12M248 65a13 13 0 0 0 0 18M264 65a13 13 0 0 1 0 18" stroke="#5a5a5a" stroke-width="1.3"/>
<!-- cloud -->
<path d="M290 78a5 5 0 0 1-1-10 7 7 0 0 1 13-1 5.5 5.5 0 0 1 0 11zM295.5 78v5M286 84h19" stroke="#2a82e0" stroke-width="1.7"/>
<!-- radar -->
<path d="M339 66a12 12 0 0 0-13 12 12 12 0 0 0 5 8M336 70a7 7 0 0 0-6 7 7 7 0 0 0 2 5M334 74a3 3 0 0 0-1 5" stroke="#2a82e0" stroke-width="1.6"/>
<circle cx="339" cy="79" r="6.5" fill="#0a3a28" stroke="#10b070" stroke-width="1.5"/><path d="M335 79h8M339 75v8" stroke="#10b070" stroke-width="1.5"/>
<!-- play -->
<path d="M373.5 69v12l11-6z" stroke="#10b070" stroke-width="1.5"/>
<!-- nouvel ordre -->
<path d="M510 83h-8a2.5 2.5 0 0 1-2.5-2.5v-15a2.5 2.5 0 0 1 2.5-2.5h11a2.5 2.5 0 0 1 2.5 2.5V77z" stroke="#2a72d5" stroke-width="1.8"/><path d="M504 72h7M507.5 68.5v7" stroke="#2a72d5" stroke-width="1.5"/><path d="M510 83l5.5-6H510z" fill="#2a72d5"/>
<!-- bars -->
<path d="M637.5 68v15M633 77h4.5M637.5 71h4M650.5 63v15M646 67h4.5M650.5 73h4.5" stroke="#10b070" stroke-width="1.5"/>
<!-- candles -->
<path d="M675 70h5v11h-5zM687 70h5v10h-5zM677.5 64v24M689.5 62v24" stroke="#10b070" stroke-width="1.5"/>
<!-- line -->
<path d="M711 81l5-7 4 6 4-11 4 11 4-7" stroke="#10b070" stroke-width="1.5" stroke-linejoin="round"/>
<!-- zoom -->
<circle cx="765" cy="71" r="8" stroke="#2a72d5" stroke-width="1.6"/><path d="M770.5 77l7.5 8M761 71h8M765 67v8" stroke="#2a72d5" stroke-width="1.6"/>
<circle cx="804" cy="71" r="8" stroke="#2a72d5" stroke-width="1.6"/><path d="M809.5 77l7.5 8M800 71h8" stroke="#2a72d5" stroke-width="1.6"/>
<!-- grid -->
<rect x="835" y="64" width="21" height="20" rx="2.5" stroke="#2a72d5" stroke-width="2"/><path d="M845.5 64v20M835 74h21" stroke="#2a72d5" stroke-width="2"/>
<!-- shift -->
<path d="M879 69h3v11h-3zM885 70h3v9h-3zM880.5 66v17M886.5 66v17" stroke="#10b070" stroke-width="1.5"/><path d="M890 74h8M895 70.5l3.5 3.5-3.5 3.5" stroke="#10b070" stroke-width="1.3"/><path d="M901.5 64v20" stroke="#2a72d5" stroke-width="1.5"/><path d="M878 85.5h24" stroke="#999" stroke-width="1.5"/>
<path d="M917 69h3v11h-3zM923 70h3v9h-3zM918.5 66v17M924.5 66v17" stroke="#10b070" stroke-width="1.5"/><path d="M929.5 64v20" stroke="#2a72d5" stroke-width="1.5"/><path d="M933 74h8M936 70.5l-3.5 3.5 3.5 3.5" stroke="#2a82e0" stroke-width="1.3"/><path d="M917 85.5h24" stroke="#999" stroke-width="1.5"/>
<!-- camera -->
<rect x="963" y="63.5" width="23" height="21" rx="3" stroke="#2a72d5" stroke-width="1.6" stroke-dasharray="3.5 3"/>
<path d="M969 86v-11a1.5 1.5 0 0 1 1.5-1.5h3.5l1.5-3h5l1.5 3h3.5a1.5 1.5 0 0 1 1.5 1.5v11z" fill="#212121" stroke="#2a72d5" stroke-width="1.6"/><circle cx="977.5" cy="79.5" r="3" stroke="#2a72d5" stroke-width="1.6"/>
<!-- cursor -->
<path d="M1015.5 66.5l16 7-6.5 2.500 5 6-2.5 2-5-6-2.5 5.5z" stroke="#2a72d5" stroke-width="1.7" fill="#2a3a50" stroke-linejoin="round"/>
<!-- crosshair -->
<circle cx="1062" cy="74" r="3" stroke="#2a72d5" stroke-width="1.5"/><path d="M1051 74h8M1065 74h8M1062 63v8M1062 77v8" stroke="#2a72d5" stroke-width="1.5"/>
<!-- vline/hline/trend/channel -->
<path d="M1107 62v9M1107 77v9" stroke="#2a72d5" stroke-width="1.5"/><circle cx="1107" cy="74" r="2.8" stroke="#2a72d5" stroke-width="1.5"/>
<path d="M1134 74h9M1149 74h9" stroke="#2a72d5" stroke-width="1.5"/><circle cx="1146" cy="74" r="2.8" stroke="#2a72d5" stroke-width="1.5"/>
<circle cx="1176" cy="83" r="2.8" stroke="#2a72d5" stroke-width="1.5"/><circle cx="1194" cy="65.5" r="2.8" stroke="#2a72d5" stroke-width="1.5"/><path d="M1178 81l14-13.5" stroke="#2a72d5" stroke-width="1.5"/>
<circle cx="1215" cy="75" r="2.6" stroke="#2a72d5" stroke-width="1.5"/><circle cx="1225" cy="65" r="2.6" stroke="#2a72d5" stroke-width="1.5"/><path d="M1217 73l6-6" stroke="#2a72d5" stroke-width="1.5"/><circle cx="1222" cy="83" r="2.6" stroke="#2a72d5" stroke-width="1.5"/><path d="M1224 81l12-12" stroke="#2a72d5" stroke-width="1.5"/>
<!-- fibo -->
<path d="M1251 64h24M1251 70.5h19M1251 77h24M1257 83h18" stroke="#2a72d5" stroke-width="1.8"/><circle cx="1272" cy="70.5" r="2.5" stroke="#2a72d5" stroke-width="1.5"/><circle cx="1254" cy="83" r="2.5" stroke="#2a72d5" stroke-width="1.5"/>
<!-- T -->
<path d="M1294 67h16M1302 67v16" stroke="#2a72d5" stroke-width="1.8"/>
<!-- shapes -->
<path d="M1334 65l4.5 7.5h-9z" stroke="#2a72d5" stroke-width="1.5"/><circle cx="1346" cy="68.5" r="4" stroke="#2a72d5" stroke-width="1.5"/><path d="M1334.5 77l4.5 3.5-1.7 5h-5.6l-1.7-5z" stroke="#2a72d5" stroke-width="1.5"/><rect x="1342" y="77" width="8" height="8.5" rx="2" stroke="#2a72d5" stroke-width="1.5"/>
<!-- right -->
<circle cx="1747" cy="72.5" r="6.5" stroke="#bbb" stroke-width="1.5"/><path d="M1751.500 77.500l4.500 4.500" stroke="#bbb" stroke-width="1.5"/>
<circle cx="1793" cy="74" r="7.8" stroke="#bbb" stroke-width="1.5"/><circle cx="1793" cy="71.5" r="3" stroke="#bbb" stroke-width="1.5"/><path d="M1787.5 79.5a6 4.5 0 0 1 11 0" stroke="#bbb" stroke-width="1.5"/>
<path d="M1837 64.5l4.5 4.5h-2.5v4h-4v-4h-2.5z" stroke="#10b070" stroke-width="1.4"/>
<text x="1829" y="84" font-family="Liberation Sans" font-size="10" fill="#10b070" textLength="16" lengthAdjust="spacingAndGlyphs">LVL</text>
<rect x="1856.5" y="66.5" width="55" height="17" stroke="#666" fill="#222"/><rect x="1857" y="67" width="21" height="16" fill="#16823a"/>
<!-- eurusd order doc -->
<path d="M40 924h-5a2.5 2.5 0 0 1-2.5-2.5v-14a2.5 2.5 0 0 1 2.5-2.5h8a2.5 2.5 0 0 1 2.5 2.5V919z" stroke="#2a72d5" stroke-width="1.8"/><path d="M36 911.5h4M36 916h4" stroke="#2a72d5" stroke-width="1.5"/><path d="M40 924l5.5-5.5H40z" fill="#2a72d5"/>
<!-- bottom icons -->
<path d="M1602 982h13l1 13h-15zM1605 982v-2a3.5 3.5 0 0 1 7 0v2" stroke="#b36b10" stroke-width="1.5" fill="#3a2a10"/>
<circle cx="1695" cy="987" r="1.5" fill="#555"/><path d="M1691 983a6 6 0 0 0 0 8M1699 983a6 6 0 0 1 0 8M1688.5 981a10 10 0 0 0 0 12M1701.5 981a10 10 0 0 1 0 12" stroke="#555" stroke-width="1.1"/>
<path d="M1780 991a4.5 4.5 0 0 1-1-9 6.5 6.5 0 0 1 12.5-1 5 5 0 0 1 0 10zM1785.5 991v4M1777 996h18" stroke="#2a82e0" stroke-width="1.6"/>
<rect x="1841" y="978" width="15" height="15" rx="2" stroke="#2a72d5" stroke-width="2"/><path d="M1844 975v3M1848.5 975v3M1853 975v3M1844 993v3M1848.5 993v3M1853 993v3M1838 981h3M1838 985.5h3M1838 990h3M1856 981h3M1856 985.5h3M1856 990h3" stroke="#2a72d5" stroke-width="1.3"/>
<!-- signal bars -->
<path d="M1781.5 1024v-4M1785.5 1024v-7M1789.5 1024v-10" stroke="#1cae5a" stroke-width="2"/><path d="M1793.5 1024v-13" stroke="#1cae5a" stroke-width="2"/><path d="M1797 1024v-16" stroke="#777" stroke-width="1"/>
</svg>
</body></html>
